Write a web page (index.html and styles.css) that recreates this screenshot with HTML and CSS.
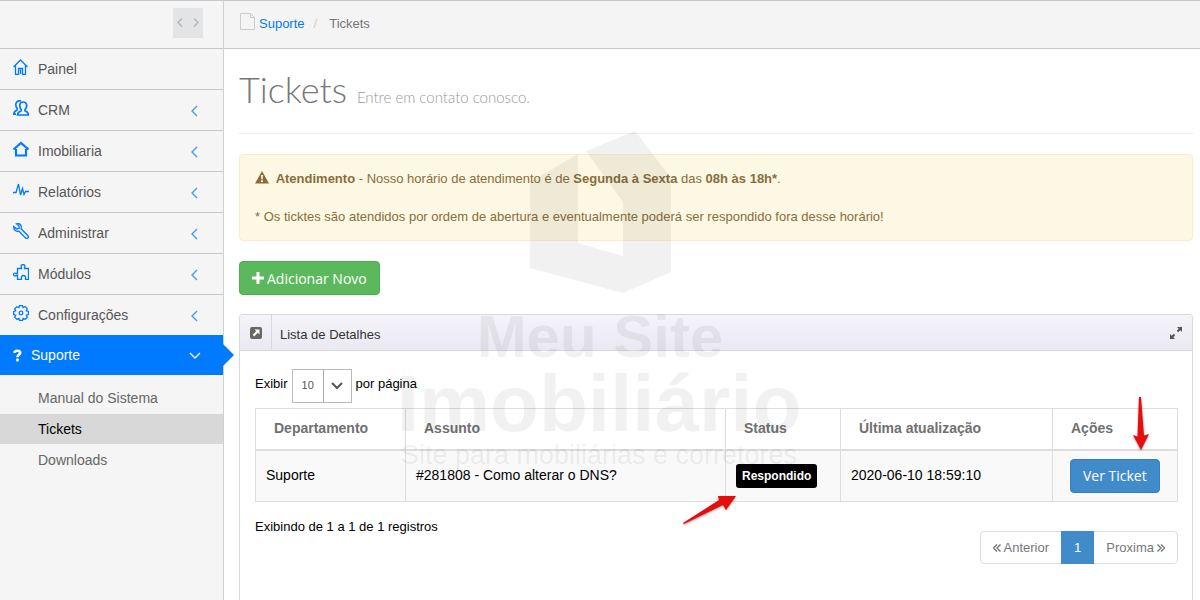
FILE: index.html
```html
<!DOCTYPE html>
<html lang="pt-BR">
<head>
    <meta charset="UTF-8" />
    <meta name="viewport" content="width=device-width, initial-scale=1" />
    <title>Tickets</title>
    <link rel="stylesheet" href="styles.css">
</head>
<body>
    <div class="page">
        <aside class="sidebar">
            <div class="sidebar-head">
                <button class="sidebar-toggle" type="button" aria-label="Recolher menu">
                    <svg width="30" height="30" viewBox="0 0 30 30"><path d="M9 10.500 5 14.500 9 18.500M21 10.500 25 14.500 21 18.500" /></svg>
                </button>
            </div>
            <nav>
                <ul class="menu">
                    <li>
                        <a href="#">
                            <svg class="menu-icon" viewBox="0 0 16 16"><path d="M.5 8 7.500 1 14.500 8M2.500 6.500V15.500H5.500V9.500H9.500V15.500H12.500V6.500M7.500 10.500V15" /></svg>
                            <span>Painel</span>
                        </a>
                    </li>
                    <li>
                        <a href="#">
                            <svg class="menu-icon bold" viewBox="0 0 16 16"><path d="M8.200 10.800C5.500 11.800 4.500 12.500 4.500 15H15.500C15.500 12.500 14.500 11.800 12 10.800V9.500C14.500 7 14.500 2 10.200 2S6 7 8.200 9.500ZM8 1C5 .2 2.500 2 2.800 5 3 7 3.500 7.800 4.200 8.600V10C1.700 11 .8 12 .8 14.200H3" /></svg>
                            <span>CRM</span>
                            <svg class="chevron" viewBox="0 0 12 12"><path d="M8 1 3 6 8 11" /></svg>
                        </a>
                    </li>
                    <li>
                        <a href="#">
                            <svg class="menu-icon heavy" viewBox="0 0 16 16"><path d="M.5 8.500 8 2 15.500 8.500M3 8V14.500H13V8" /></svg>
                            <span>Imobiliaria</span>
                            <svg class="chevron" viewBox="0 0 12 12"><path d="M8 1 3 6 8 11" /></svg>
                        </a>
                    </li>
                    <li>
                        <a href="#">
                            <svg class="menu-icon" viewBox="0 0 16 16"><path d="M0 10.500H3L5.500 2 7.500 13 9.500 6.500 11 12.500 12.500 9.500H16" /></svg>
                            <span>Relatórios</span>
                            <svg class="chevron" viewBox="0 0 12 12"><path d="M8 1 3 6 8 11" /></svg>
                        </a>
                    </li>
                    <li>
                        <a href="#">
                            <svg class="menu-icon" viewBox="0 0 16 16"><path d="M3.500.8C5.500.2 7.500 1 8.200 3 8.500 4 8.300 5 8 5.800L15.200 13C16 14.500 14.200 16 12.800 15.200L6 8.200C3 9 .2 6.500.8 3.500L3.500 6 6 5.500V3Z" /></svg>
                            <span>Administrar</span>
                            <svg class="chevron" viewBox="0 0 12 12"><path d="M8 1 3 6 8 11" /></svg>
                        </a>
                    </li>
                    <li>
                        <a href="#">
                            <svg class="menu-icon" viewBox="0 0 16 16"><path d="M4.500 4.500H8.500V3.500C7.500 2 8.500.5 10 .5S12.500 2 11.500 3.500V4.500H15.500V15.500H12.500V14C13 12.500 11.800 11.500 10.500 11.500S8 12.500 8.500 14V15.500H4.500V11.500H3C1.500 12.500.5 11.500.5 10.500S1.500 8.500 3 9.500H4.500Z" /></svg>
                            <span>Módulos</span>
                            <svg class="chevron" viewBox="0 0 12 12"><path d="M8 1 3 6 8 11" /></svg>
                        </a>
                    </li>
                    <li>
                        <a href="#">
                            <svg class="menu-icon" viewBox="0 0 16 16"><path d="M6.500.6H9.500L10 2.600 12 1.500 14.300 3.800 13.300 5.800 15.400 6.500V9.500L13.300 10.100 14.300 12.200 12.200 14.300 10.100 13.300 9.500 15.400H6.500L5.900 13.300 3.800 14.300 1.700 12.200 2.700 10.100.6 9.500V6.500L2.700 5.900 1.700 3.800 3.800 1.700 5.900 2.700Z" /><circle cx="8" cy="8" r="1.800" /></svg>
                            <span>Configurações</span>
                            <svg class="chevron" viewBox="0 0 12 12"><path d="M8 1 3 6 8 11" /></svg>
                        </a>
                    </li>
                    <li class="active">
                        <a href="#">
                            <svg class="question-icon" viewBox="0 0 10 14"><path d="M1.500 4.200C1.800 1 8 .8 8 4 8 6 5 6 5 9" /><path d="M5 10.500V13.500" /></svg>
                            <span>Suporte</span>
                            <svg class="chevron" viewBox="0 0 12 12"><path d="M1 3 6 8 11 3" /></svg>
                        </a>
                        <ul class="submenu">
                            <li><a href="#">Manual do Sistema</a></li>
                            <li class="current"><a href="#">Tickets</a></li>
                            <li><a href="#">Downloads</a></li>
                        </ul>
                    </li>
                </ul>
            </nav>
        </aside>

        <main class="main">
            <div class="breadcrumb">
                <svg class="file-icon" viewBox="0 0 15 17"><path d="M.5.5H10.500L14.500 4.500V16.500H.5ZM10.500.5V4.500H14.500" /></svg>
                <a href="#">Suporte</a>
                <span class="divider">/</span>
                <span>Tickets</span>
            </div>

            <div class="content">
                <h1 class="page-header">Tickets <small>Entre em contato conosco.</small></h1>

                <div class="alert">
                    <p>
                        <svg class="warning-icon" viewBox="0 0 14 13"><path fill-rule="evenodd" d="M7 0 14 12.500H0ZM6 4 6.400 8.500H7.600L8 4ZM6 9.300V11H8V9.300Z" /></svg>
                        <strong>Atendimento</strong> - Nosso horário de atendimento é de <strong>Segunda à Sexta</strong> das <strong>08h às 18h*</strong>.
                    </p>
                    <p>* Os ticktes são atendidos por ordem de abertura e eventualmente poderá ser respondido fora desse horário!</p>
                </div>

                <button class="btn btn-success" type="button">
                    <svg width="12" height="12" viewBox="0 0 12 12"><path d="M4.500 0H7.500V4.500H12V7.500H7.500V12H4.500V7.500H0V4.500H4.500Z" /></svg>
                    Adicionar Novo
                </button>

                <section class="panel">
                    <header class="panel-head">
                        <span class="panel-icon">
                            <svg width="12" height="12" viewBox="0 0 12 12"><rect width="12" height="12" rx="2" fill="#666" /><path d="M4.500 2.500H9.500V7.500L7.800 5.800 4.200 9.400 2.600 7.800 6.200 4.200Z" fill="#fff" /></svg>
                        </span>
                        <h2>Lista de Detalhes</h2>
                        <button class="expand" type="button" aria-label="Expandir">
                            <svg width="12" height="12" viewBox="0 0 12 12"><path d="M7 0H12V5L10.300 3.300 8.200 5.200 6.800 3.800 8.700 1.700ZM0 7V12H5L3.300 10.300 5.200 8.200 3.800 6.800 1.700 8.700Z" fill="#555" /></svg>
                        </button>
                    </header>
                    <div class="panel-body">
                        <div class="length">
                            <label for="length">Exibir</label>
                            <span class="select">
                                <select id="length">
                                    <option>10</option>
                                    <option>25</option>
                                    <option>50</option>
                                </select>
                                <span class="select-arrow"><svg width="12" height="8" viewBox="0 0 12 8"><path d="M1 1 6 6 11 1" /></svg></span>
                            </span>
                            <span>por página</span>
                        </div>

                        <table class="tickets">
                            <thead>
                                <tr>
                                    <th class="col-dep">Departamento</th>
                                    <th>Assunto</th>
                                    <th class="col-status">Status</th>
                                    <th class="col-date">Última atualização</th>
                                    <th class="col-actions">Ações</th>
                                </tr>
                            </thead>
                            <tbody>
                                <tr>
                                    <td>Suporte</td>
                                    <td>#281808 - Como alterar o DNS?</td>
                                    <td>
                                        <span class="badge">Respondido</span>
                                        <svg class="arrow arrow-status" width="54" height="30" viewBox="0 0 54 30"><path d="M0 28 36 5 35 1 53 1 43 15 40 10 1 29Z" /></svg>
                                    </td>
                                    <td>2020-06-10 18:59:10</td>
                                    <td class="actions">
                                        <a class="btn btn-primary" href="#">Ver Ticket</a>
                                        <svg class="arrow arrow-action" width="18" height="54" viewBox="0 0 18 54"><path d="M7 0H9L12 38.500 17 37 9 53 1 38 5.500 39.500Z" /></svg>
                                    </td>
                                </tr>
                            </tbody>
                        </table>

                        <div class="table-foot">
                            <p>Exibindo de 1 a 1 de 1 registros</p>
                            <nav class="pagination" aria-label="Paginação">
                                <a href="#"><svg width="8" height="8" viewBox="0 0 8 8"><path d="M4 .5.5 4 4 7.500M7.500.5 4 4 7.500 7.500" /></svg> Anterior</a>
                                <a class="active" href="#">1</a>
                                <a href="#">Proxima <svg width="8" height="8" viewBox="0 0 8 8"><path d="M.5.5 4 4 .5 7.500M4 .5 7.500 4 4 7.500" /></svg></a>
                            </nav>
                        </div>
                    </div>
                </section>
            </div>
        </main>
    </div>

    <svg class="watermark" width="420" height="350" viewBox="0 0 420 350">
        <path d="M140 57 188 29V118L233 131V168L140 143Z" />
        <path d="M196 26 245 6 281 53V147L233 168V77Z" />
        <text class="wm-bold" x="210" y="232" font-size="60">Meu Site</text>
        <text class="wm-bold" x="209" y="306" font-size="80">Imobiliário</text>
        <text x="209" y="339" font-size="27">Site para mobiliárias e corretores</text>
    </svg>
</body>
</html>
```

FILE: styles.css
```css
* {
    box-sizing: border-box;
    margin: 0;
    padding: 0;
}

body {
    font-family: "Liberation Sans", Arial, sans-serif;
    font-size: 13px;
    line-height: 19px;
    color: #000;
    background: #fff;
}

a {
    text-decoration: none;
}

ul {
    list-style: none;
}

svg {
    flex: none;
}

.page {
    display: flex;
    height: 100vh;
    border-top: 1px solid #c8c7cc;
    overflow: hidden;
}

/* sidebar */
.sidebar {
    flex: none;
    width: 224px;
    background: #f5f5f5;
    border-right: 1px solid #d0d0d2;
    font-size: 14px;
}

.sidebar-head {
    display: flex;
    justify-content: flex-end;
    height: 48px;
    padding: 7px 20px 0 0;
    border-bottom: 1px solid #c8c7cc;
}

.sidebar-toggle {
    width: 30px;
    height: 30px;
    border: none;
    background: #e2e4e6;
    cursor: pointer;
}

.sidebar-toggle svg {
    display: block;
    fill: none;
    stroke: #b5b5b5;
    stroke-width: 1.3;
}

.menu > li > a {
    display: flex;
    align-items: center;
    gap: 9px;
    height: 41px;
    padding: 0 22px 0 13px;
    color: #555;
    border-bottom: 1px solid #c8c7cc;
}

.menu > li:nth-last-child(2) > a {
    height: 40px;
    border-bottom: none;
}

.menu-icon {
    width: 16px;
    height: 16px;
    margin-bottom: 4px;
    fill: none;
    stroke: #007aff;
    stroke-width: 1.3;
}

.menu-icon.bold {
    stroke-width: 1.7;
}

.menu-icon.heavy {
    stroke-width: 2.2;
}

.chevron {
    width: 12px;
    height: 12px;
    margin: 2px 0 0 auto;
    fill: none;
    stroke: #3c96ff;
    stroke-width: 1.3;
}

.menu > li.active > a {
    position: relative;
    height: 40px;
    color: #fff;
    background: #007aff;
    border-bottom: none;
}

.menu > li.active > a::after {
    content: "";
    position: absolute;
    left: 100%;
    top: 9px;
    border: 11px solid transparent;
    border-left-color: #007aff;
    border-right: none;
}

.active .chevron {
    stroke: #fff;
}

.question-icon {
    width: 9px;
    height: 13px;
    fill: none;
    stroke: #fff;
    stroke-width: 3;
}

.submenu {
    display: flex;
    flex-direction: column;
    gap: 1px;
    padding-top: 8px;
}

.submenu a {
    display: block;
    padding-left: 38px;
    line-height: 30px;
    color: #666;
}

.submenu .current a {
    color: #000;
    background: #d8d8d8;
}

/* main column */
.main {
    flex: 1;
    display: flex;
    flex-direction: column;
    min-width: 0;
}

.breadcrumb {
    display: flex;
    align-items: center;
    height: 48px;
    padding: 0 16px 2px;
    color: #777;
    background: #f4f4f4;
    border-bottom: 1px solid #c8c7cc;
}

.breadcrumb a {
    color: #007aff;
}

.breadcrumb .divider {
    margin: 0 12px 0 9px;
    color: #ccc;
}

.file-icon {
    width: 15px;
    height: 17px;
    margin: 0 4px 4px 0;
    fill: none;
    stroke: #ccc;
}

.content {
    flex: 1;
    display: flex;
    flex-direction: column;
    align-items: flex-start;
    padding: 0 7px 0 15px;
}

.content > * {
    width: 100%;
}

.page-header {
    height: 85px;
    margin-bottom: 20px;
    padding-top: 20px;
    font-family: Lato, "Open Sans", sans-serif;
    font-size: 36px;
    font-weight: 300;
    line-height: 40px;
    color: #777;
    border-bottom: 1px solid #eee;
}

.page-header small {
    font-size: 15px;
    color: #999;
}

.alert {
    display: flex;
    flex-direction: column;
    gap: 19px;
    margin-bottom: 20px;
    padding: 14px 15px;
    color: #8a6d3b;
    background: #fcf8e3;
    border: 1px solid #faebcc;
    border-radius: 4px;
}

.warning-icon {
    width: 14px;
    height: 13px;
    margin-right: 3px;
    vertical-align: -1px;
    fill: #8a6d3b;
}

.btn {
    display: inline-flex;
    align-items: center;
    justify-content: center;
    gap: 3px;
    height: 34px;
    padding: 0 12px;
    font-family: "Open Sans", sans-serif;
    font-size: 14px;
    color: #fff;
    border: 1px solid;
    border-radius: 4px;
    cursor: pointer;
}

.btn svg {
    fill: #fff;
}

.btn-success {
    width: auto;
    margin-bottom: 19px;
    background: #5cb85c;
    border-color: #4cae4c;
}

.btn-primary {
    background: #428bca;
    border-color: #357ebd;
}

/* panel */
.panel {
    flex: 1;
    border: 1px solid #d9d9dc;
    border-bottom: none;
    border-radius: 4px 4px 0 0;
}

.panel-head {
    display: flex;
    align-items: center;
    height: 36px;
    background: linear-gradient(#f5f4f9, #eae8f2);
    border-bottom: 1px solid #d9d9dc;
    border-radius: 3px 3px 0 0;
}

.panel-head h2 {
    flex: 1;
    padding: 4px 0 0 8px;
    font-size: 13px;
    font-weight: normal;
    color: #333;
}

.panel-icon {
    display: flex;
    align-items: center;
    align-self: stretch;
    padding: 0 9px 0 10px;
    border-right: 1px solid #d9d9dc;
}

.expand {
    display: flex;
    padding: 0 10px;
    border: none;
    background: none;
    cursor: pointer;
}

.panel-body {
    padding: 18px 14px 0 15px;
}

.length {
    display: flex;
    gap: 4px;
    margin-bottom: 5px;
    line-height: 30px;
}

.select {
    position: relative;
    width: 60px;
    height: 34px;
}

.select select {
    display: block;
    width: 100%;
    height: 100%;
    padding: 0 9px 3px;
    font-family: inherit;
    font-size: 11px;
    color: #555;
    background: #fff;
    border: 1px solid #bbb;
    border-radius: 0;
    appearance: none;
}

.select-arrow {
    position: absolute;
    inset: 1px 1px 1px auto;
    display: flex;
    align-items: center;
    justify-content: center;
    width: 28px;
    border-left: 1px solid #aaa;
    pointer-events: none;
}

.select-arrow path {
    fill: none;
    stroke: #555;
    stroke-width: 2;
}

.tickets {
    width: 100%;
    table-layout: fixed;
    border-collapse: collapse;
    font-size: 14px;
}

.tickets th,
.tickets td {
    border: 1px solid #ddd;
    text-align: left;
    vertical-align: middle;
}

.tickets th {
    height: 41px;
    padding: 0 18px;
    border-bottom-width: 2px;
    color: #707070;
}

.tickets td {
    position: relative;
    height: 52px;
    padding: 0 10px;
    background: #f9f9f9;
}

.tickets .actions {
    padding: 0 17px;
}

.col-dep {
    width: 150px;
}

.col-status {
    width: 115px;
}

.col-date {
    width: 212px;
}

.col-actions {
    width: 125px;
}

.badge {
    display: inline-block;
    padding: 0 6px;
    font-size: 12px;
    font-weight: bold;
    line-height: 24px;
    color: #fff;
    background: #000;
    border-radius: 3px;
}

.arrow {
    position: absolute;
    z-index: 2;
    fill: #e60d0d;
    filter: drop-shadow(0 1px 1px rgba(0, 0, 0, 0.4));
}

.arrow-status {
    top: 44px;
    left: -43px;
}

.arrow-action {
    bottom: 50px;
    left: 79px;
}

.table-foot {
    display: flex;
    justify-content: space-between;
    align-items: flex-start;
    padding-top: 15px;
}

.pagination {
    display: flex;
    margin-top: 14px;
    border: 1px solid #ddd;
    border-radius: 4px;
}

.pagination a {
    display: flex;
    align-items: center;
    gap: 3px;
    height: 31px;
    padding: 0 12px;
    color: #777;
}

.pagination a.active {
    height: 33px;
    margin: -1px 0;
    padding: 0 13px;
    color: #fff;
    background: #428bca;
}

.pagination path {
    fill: none;
    stroke: #777;
    stroke-width: 1.4;
}

/* logo laid over the whole page */
.watermark {
    position: fixed;
    top: 50%;
    left: 50%;
    transform: translate(-50%, -50%);
    z-index: 1;
    opacity: 0.055;
    pointer-events: none;
}

.watermark text {
    text-anchor: middle;
}

.watermark .wm-bold {
    font-weight: bold;
}
```
